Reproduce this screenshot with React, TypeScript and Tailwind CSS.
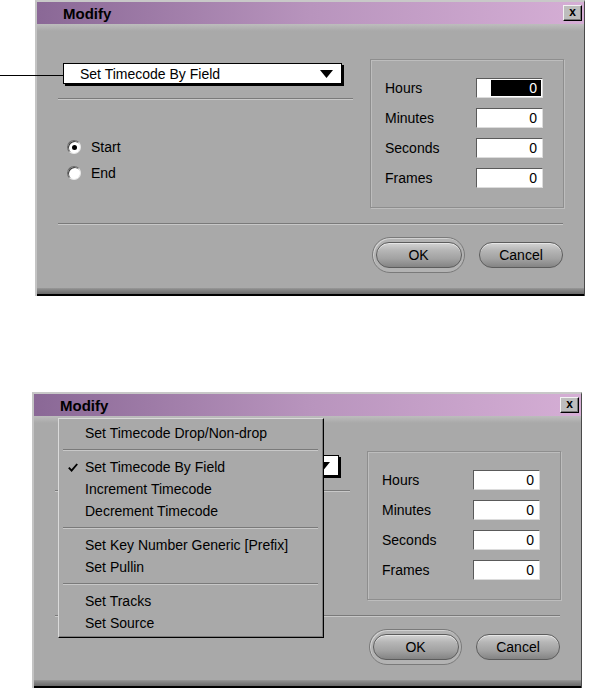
import React from "react";

const FONT = "font-['Liberation_Sans',Arial,Helvetica,sans-serif]";

function Sep({ className = "" }: { className?: string }) {
  return (
    <div
      className={`h-[2px] border-t border-t-[#7a7a7a] border-b border-b-[#c8c8c8] ${className}`}
    />
  );
}

function Radio({ checked, label, className = "" }: { checked?: boolean; label?: string; className?: string }) {
  return (
    <div className={`flex items-center h-[20px] ${className}`}>
      <div className="ml-[9px] w-[14px] h-[14px] rounded-full bg-white border border-t-[#6a6a6a] border-l-[#6a6a6a] border-r-[#e6e6e6] border-b-[#e6e6e6] shadow-[inset_1px_1px_0_#3c3c3c] flex items-center justify-center">
        {checked && <div className="w-[5px] h-[5px] rounded-full bg-black" />}
      </div>
      {label && <span className="ml-[10px] text-[14px] leading-none">{label}</span>}
    </div>
  );
}

function Field({ label, selected }: { label: string; selected?: boolean }) {
  return (
    <div className="flex items-center h-[30px]">
      <span className="w-[91px] text-[14px] leading-none">{label}</span>
      <div className="w-[67px] h-[20px] bg-white border-t border-l border-t-[#5a5a5a] border-l-[#5a5a5a] border-b border-r border-b-[#dcdcdc] border-r-[#dcdcdc] flex text-[14px]">
        {selected ? (
          <>
            <div className="w-[14px]" />
            <div className="flex-1 bg-black text-white text-right pr-[4px] leading-[17px] my-px mr-px">0</div>
          </>
        ) : (
          <div className="flex-1 text-right pr-[5px] leading-[18px]">0</div>
        )}
      </div>
    </div>
  );
}

const PILL =
  "h-[26px] rounded-[13px] border border-[#5c5c5c] bg-[linear-gradient(to_bottom,#d4d4d4_0%,#b6b6b6_30%,#a2a2a2_65%,#848484_100%)] shadow-[inset_0_1px_0_#e6e6e6] flex items-center justify-center text-[14px] leading-none";

function Check() {
  return (
    <svg width="10" height="9" viewBox="0 0 10 9" className="ml-[9px]">
      <path d="M0.8 4.6 L3.6 7.6 L9.2 1" stroke="#000" strokeWidth="1.9" fill="none" />
    </svg>
  );
}

function MItem({ children, checked }: { children: React.ReactNode; checked?: boolean }) {
  return (
    <div className="h-[22px] flex items-center">
      <div className="w-[26px] flex items-center">{checked && <Check />}</div>
      <span className="leading-none">{children}</span>
    </div>
  );
}

function MSep() {
  return (
    <div className="h-[12px] flex items-center pl-[4px] pr-[5px]">
      <Sep className="w-full" />
    </div>
  );
}

function Menu() {
  return (
    <div className="absolute left-[24px] top-[24px] z-10 w-[266px] h-[220px] bg-[#a9a9a9] border-t border-l border-t-[#dadada] border-l-[#dadada] border-r border-b border-r-black border-b-black shadow-[inset_-1px_-1px_0_#7c7c7c] pt-[3px] text-[14px]">
      <MItem>Set Timecode Drop/Non-drop</MItem>
      <MSep />
      <MItem checked>Set Timecode By Field</MItem>
      <MItem>Increment Timecode</MItem>
      <MItem>Decrement Timecode</MItem>
      <MSep />
      <MItem>Set Key Number Generic [Prefix]</MItem>
      <MItem>Set Pullin</MItem>
      <MSep />
      <MItem>Set Tracks</MItem>
      <MItem>Set Source</MItem>
    </div>
  );
}

function Dialog({ menu, hoursSelected }: { menu?: boolean; hoursSelected?: boolean }) {
  return (
    <div className="relative w-[550px] h-[296px] flex flex-col bg-[#a9a9a9] border-t-2 border-t-[#c8c8c8] border-l-2 border-l-[#c4c4c4] border-r border-r-[#4a4a4a]">
      {/* Title bar */}
      <div className="h-[22px] flex items-center justify-between bg-[linear-gradient(to_right,#8a6896,#b894bd_50%,#d5aed5)] pl-[26px] pr-[2px]">
        <span className="font-bold text-[15px] leading-none text-black">Modify</span>
        <div className="w-[19px] h-[16px] bg-[#bdbdbd] border-t border-l border-t-[#f2f2f2] border-l-[#f2f2f2] border-b border-r border-b-black border-r-black shadow-[inset_-1px_-1px_0_#7a7a7a] flex items-center justify-center text-[12px] font-bold leading-none pb-[2px]">
          x
        </div>
      </div>

      {/* Body */}
      <div className="flex-1 pl-[21px] bg-[linear-gradient(to_bottom,#bdbdbd,#a9a9a9_7px)]">
        <div className="flex mt-[35px]">
          {/* Left column */}
          <div className="w-[295px] flex flex-col">
            <div className="ml-[5px] mt-[4px] w-[279px] h-[21px] bg-white border border-black shadow-[2px_2px_0_#000] flex items-center justify-between pl-[16px] pr-[8px]">
              <span className="text-[14px] leading-none">{menu ? "" : "Set Timecode By Field"}</span>
              <svg width="13" height="8" viewBox="0 0 13 8">
                <path d="M0 0H13L6.5 8Z" fill="#000" />
              </svg>
            </div>
            <Sep className="mt-[14px] w-full" />
            <Radio checked label={menu ? undefined : "Start"} className="mt-[37px]" />
            <Radio label={menu ? undefined : "End"} className="mt-[6px]" />
          </div>

          {/* Group box */}
          <div className="ml-[17px] w-[194px] h-[149px] border border-[#8e8e8e] shadow-[inset_1px_1px_0_#bdbdbd,1px_1px_0_#bdbdbd] pt-[13px] pl-[14px]">
            <Field label="Hours" selected={hoursSelected} />
            <Field label="Minutes" />
            <Field label="Seconds" />
            <Field label="Frames" />
          </div>
        </div>

        <Sep className="mt-[15px] w-[505px]" />

        <div className="w-[505px] flex items-center justify-end mt-[12px]">
          <div className="w-[93px] h-[36px] rounded-[18px] border border-[#7a7a7a] bg-[#b3b3b3] shadow-[inset_1px_1px_0_#d2d2d2] flex items-center justify-center">
            <div className={`w-[86px] ${PILL}`}>OK</div>
          </div>
          <div className={`ml-[14px] w-[84px] ${PILL}`}>Cancel</div>
        </div>
      </div>

      {/* Bottom bevel */}
      <div className="h-[9px] bg-[linear-gradient(to_bottom,#b4b4b4,#8e8e8e_25%,#6a6a6a)] border-b-2 border-b-black" />

      {menu && <Menu />}
    </div>
  );
}

export default function App() {
  return (
    <div className={`relative w-[589px] h-[690px] bg-white overflow-hidden text-black ${FONT}`}>
      <div className="pl-[35px]">
        <Dialog hoursSelected />
      </div>
      <div className="mt-[96px] pl-[32px]">
        <Dialog menu />
      </div>
      <div className="absolute left-0 top-[75px] w-[63px] h-px bg-black z-20" />
    </div>
  );
}
